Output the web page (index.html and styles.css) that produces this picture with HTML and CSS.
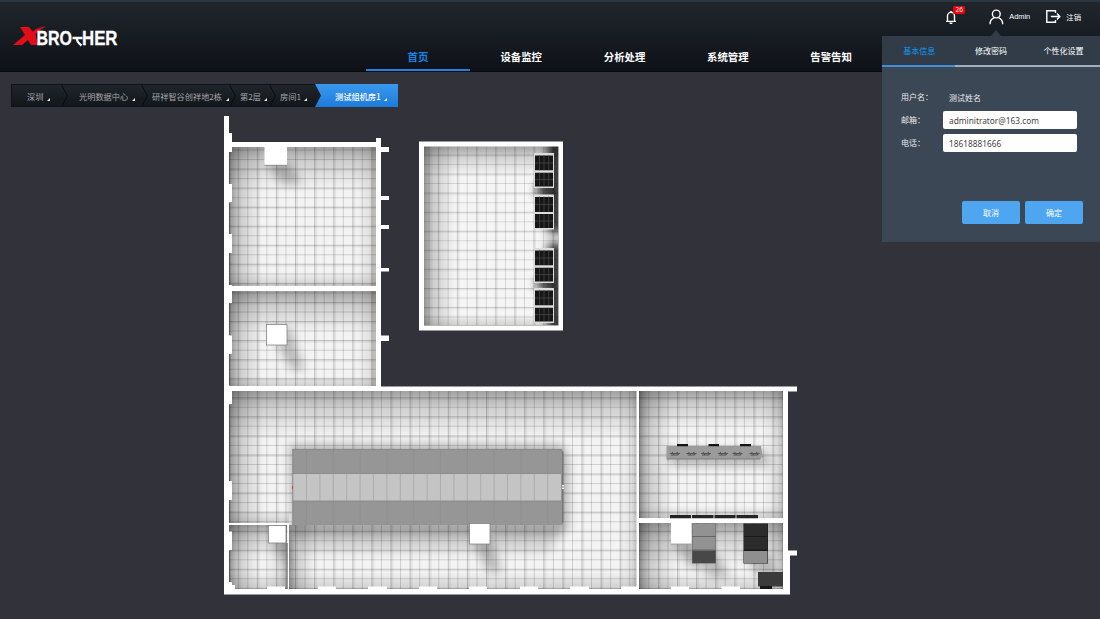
FILE: index.html
```html
<!DOCTYPE html>
<html lang="zh-CN">
<head>
<meta charset="utf-8">
<title>XBrother</title>
<link rel="stylesheet" href="styles.css">
</head>
<body>
<header class="header">
  <svg class="logo" width="112" height="26" viewBox="0 0 112 26">
    <path class="logo-x" d="M7 3h9l3.500 4.500Q25 3 33 2.500q-7 3-10.500 8L25 21h-7l-3-5-6 5H0l12-10z"/>
    <g class="logo-text">
      <text x="23.500" y="20.700" textLength="35.500" lengthAdjust="spacingAndGlyphs">BRO</text>
      <text x="69" y="20.700" textLength="35.500" lengthAdjust="spacingAndGlyphs">HER</text>
    </g>
    <path class="logo-t" d="M59.500 14h10M64 14q-.500 4 4.500 7.500"/>
  </svg>
  <nav class="nav">
    <a class="nav-item active">首页</a>
    <a class="nav-item">设备监控</a>
    <a class="nav-item">分析处理</a>
    <a class="nav-item">系统管理</a>
    <a class="nav-item">告警告知</a>
  </nav>
  <div class="tools">
    <span class="bell">
      <svg width="12" height="15" viewBox="0 0 12 15"><path class="line" d="M1 11.400h10M2.500 11.200V6a3.500 3.700 0 0 1 7 0v5.200M5.200 1.700h1.600M4.600 13.200h2.800"/></svg>
      <b class="badge">26</b>
    </span>
    <span class="tool user">
      <svg width="15" height="16" viewBox="0 0 15 16"><circle class="line" cx="7.300" cy="5" r="3.900"/><path class="line" d="M1 15.200c0-3 1.600-5.400 4.300-6.500M13.700 15.200c0-3-1.600-5.400-4.300-6.500"/></svg>
      Admin
    </span>
    <span class="tool">
      <svg width="15" height="13" viewBox="0 0 15 13"><path class="line" d="M9.500 3V.8H.8v11.400h8.700V10M4.800 6.500h8.800M11 3.600l2.800 2.900L11 9.400"/></svg>
      注销
    </span>
  </div>
</header>

<main class="main">
  <div class="crumbs">
    <a class="crumb c1">深圳<i></i></a>
    <a class="crumb c2">光明数据中心<i></i></a>
    <a class="crumb c3">研祥智谷创祥地2栋<i></i></a>
    <a class="crumb c4">第2层<i></i></a>
    <a class="crumb c5">房间1<i></i></a>
    <a class="crumb current">测试组机房1<i></i></a>
  </div>

  <svg class="plan" width="1100" height="511" viewBox="0 108 1100 511">
    <defs>
      <linearGradient id="fromLeft"><stop offset="0" stop-opacity=".4"/><stop offset=".3" stop-opacity=".16"/><stop offset="1" stop-opacity="0"/></linearGradient>
      <linearGradient id="fromRight" x1="1" x2="0"><stop offset="0" stop-opacity=".24"/><stop offset=".35" stop-opacity=".07"/><stop offset="1" stop-opacity="0"/></linearGradient>
      <linearGradient id="fromTop" x2="0" y2="1"><stop offset="0" stop-opacity=".34"/><stop offset=".35" stop-opacity=".15"/><stop offset="1" stop-opacity="0"/></linearGradient>
      <linearGradient id="fromBottom" y1="1" x2="0" y2="0"><stop offset="0" stop-opacity=".15"/><stop offset="1" stop-opacity="0"/></linearGradient>
      <filter id="soft" x="-50%" y="-50%" width="200%" height="200%"><feGaussianBlur stdDeviation="5"/></filter>
      <clipPath id="rooms"><path d="M229 147h147v139H229zM229 291h147v95H229zM229 391h408v198H229zM639 391h144v127H639zM639 523h144v66H639z"/></clipPath>
      <clipPath id="annex"><path d="M424 146h134.500v179.500H424z"/></clipPath>
      <clipPath id="floors"><path d="M229 147h147v139H229zM229 291h147v95H229zM229 391h408v198H229zM639 391h144v127H639zM639 523h144v66H639zM424 146h134.500v179.500H424z"/></clipPath>
      <g id="rack">
        <rect width="20" height="35" fill="#ddd"/>
        <path d="M1 2.500h18v15H1zM1 19.500h18v14H1z" fill="#161616"/>
        <path d="M5.500 2v31.500M10 2v31.500M14.700 2v31.500M1 10h18M1 26.500h18" stroke="#4a4a4a" stroke-width=".7"/>
        <path d="M0 18.500h20" stroke="#ddd" stroke-width="2"/>
      </g>
      <g id="console"><path d="M0 1h10M2-.5l2 3M7-.5l1.500 3M1 2.500h7" stroke="#555" stroke-width="1.100" fill="none"/></g>
    </defs>

    <!-- floors -->
    <path fill="#f3f3f3" d="M229 147h147v139H229zM229 291h147v95H229zM229 391h554v198H229z"/>
    <path fill="#f5f5f5" d="M424 146h134.500v179.500H424z"/>

    <!-- tile joints: wide dashed strokes, one dash per joint -->
    <g clip-path="url(#rooms)" stroke="#000" fill="none">
      <path d="M237.700 370H790" stroke-width="460" stroke-dasharray="1 8.550" stroke-opacity=".15"/>
      <path d="M237.700 370H790" stroke-width="460" stroke-dasharray="3 16.100" stroke-opacity=".06"/>
      <path d="M510 149.500V600" stroke-width="570" stroke-dasharray="1 8.530" stroke-opacity=".15"/>
      <path d="M510 168.500V600" stroke-width="570" stroke-dasharray="2.600 16.460" stroke-opacity=".06"/>
    </g>
    <g clip-path="url(#annex)" stroke="#000" fill="none">
      <path d="M428.500 236H560" stroke-width="190" stroke-dasharray="1 8.550" stroke-opacity=".13"/>
      <path d="M437.500 236H560" stroke-width="190" stroke-dasharray="3 16.100" stroke-opacity=".05"/>
      <path d="M491 154.500V330" stroke-width="140" stroke-dasharray="1 8.530" stroke-opacity=".13"/>
      <path d="M491 154.500V330" stroke-width="140" stroke-dasharray="2.600 16.460" stroke-opacity=".05"/>
    </g>

    <g fill="url(#fromLeft)">
      <rect x="229" y="147" width="34" height="139"/><rect x="229" y="291" width="34" height="95"/>
      <rect x="229" y="391" width="36" height="133"/><rect x="229" y="525" width="30" height="64"/>
      <rect x="289" y="525" width="26" height="64"/><rect x="639" y="391" width="34" height="127"/>
      <rect x="639" y="523" width="38" height="66"/><rect x="424" y="146" width="32" height="180"/>
    </g>
    <g fill="url(#fromRight)">
      <rect x="356" y="147" width="20" height="139"/><rect x="356" y="291" width="20" height="95"/>
      <rect x="620" y="391" width="17" height="198"/><rect x="762" y="391" width="21" height="127"/>
      <rect x="762" y="523" width="21" height="66"/><rect x="265" y="525" width="22" height="64"/>
    </g>
    <g fill="url(#fromTop)">
      <rect x="229" y="147" width="147" height="42"/><rect x="229" y="291" width="147" height="42"/>
      <rect x="229" y="391" width="408" height="46"/><rect x="639" y="391" width="144" height="38"/>
      <rect x="639" y="523" width="144" height="42"/><rect x="424" y="146" width="134.500" height="30"/>
      <rect x="229" y="525" width="58" height="34"/>
    </g>
    <g fill="url(#fromBottom)">
      <rect x="229" y="272" width="147" height="14"/><rect x="229" y="376" width="147" height="10"/>
      <rect x="229" y="572" width="408" height="17"/><rect x="229" y="510" width="60" height="13"/>
      <rect x="639" y="506" width="144" height="12"/><rect x="639" y="573" width="144" height="16"/>
      <rect x="424" y="314" width="134.500" height="12"/>
    </g>

    <!-- soft shadows beside the furniture -->
    <g clip-path="url(#floors)">
      <g filter="url(#soft)" opacity=".24">
        <path d="M266 162h23l13 22h-20zM268 328h22l14 42h-12zM272 540h15v30zM472 540h20l10 32h-14zM671 540h22l14 28h-16zM692 555h26l12 22h-20zM744 555h26l8 20h-20z"/>
        <path d="M289 444h272l8 12v72l-10 8H292zM665 450h100l6 16H672z"/>
      </g>
      <g filter="url(#soft)" opacity=".12"><path d="M292 524h270l-10 28H300z"/></g>
      <g filter="url(#soft)" opacity=".8"><path d="M548 140h16v93h-16zM548 243h16v90h-16zM537 183h24v14h-24zM537 278h24v12h-24z"/></g>
    </g>

    <!-- walls -->
    <g fill="#fff">
      <path d="M224 116h5v17h3v9h144v-4h5v9h8v5h-8v44h8v4h-8v25h8v4h-8v39h8v3.500h-8v64h8v5.500h-8v45.500h416v5h-9v159h9v5h-7v39H224z
        M229 152v32h3v18h-3v32h3v19h-3v32h3v1h144V147H232v5z
        M229 303v32.500h3V354h-3v32h147v-95H232v12z
        M229 404v77h3v19h-3v23h60v66h347.500V391H232v13z
        M229 525v6.500h3V550h-3v32h3v3h3v4h52.500v-64z
        M639 391v127.500h144V391zM639 523v66h144v-66z" fill-rule="evenodd"/>
      <path d="M419 141.500h144v189H419zM424 146.500v179h134.500v-179z" fill-rule="evenodd"/>
      <path d="M267 586.500h18v3h-18zM318 586.500h18v3h-18zM368 586.500h19v3h-19zM419 586.500h18v3h-18zM469 586.500h18v3h-18zM520 586.500h18v3h-18zM570 586.500h19v3h-19zM621 586.500h16v3h-16zM671 586.500h18v3h-18zM721.500 586.500h18.500v3h-18.500z"/>
    </g>
    <path d="M229.600 152v32M229.600 203v31M229.600 253v32M229.600 304v31M229.600 354v31M229.600 405v76M229.600 500v22M229.600 551v31" stroke="#444" stroke-opacity=".7" stroke-width="1.300"/>
    <path d="M287.200 543v46" stroke="#555" stroke-opacity=".65" stroke-width="1.300"/>

    <!-- pillars -->
    <path fill="#fff" d="M264.500 146h22.500v19h-22.500z"/><path d="M264.500 165.300H287" stroke="#888" stroke-width=".8"/>
    <g fill="#fff" stroke="#777" stroke-width=".7">
      <rect x="266.500" y="324.500" width="20.500" height="20.500"/>
      <rect x="268.500" y="525.500" width="17.500" height="17.500"/>
    </g>

    <!-- equipment racks -->
    <use href="#rack" x="534" y="153"/><use href="#rack" x="534" y="194.500"/>
    <use href="#rack" x="534" y="248"/><use href="#rack" x="534" y="288"/>

    <!-- cold aisle container -->
    <path d="M561 449l2.500 3v70l-2.500 3z" fill="#777"/>
    <rect x="292.500" y="449" width="269.500" height="76" fill="#969696"/>
    <rect x="293" y="473.500" width="268" height="27.500" fill="#c4c4c4"/>
    <path d="M306.500 474v27m13.400-27v27m13.400-27v27m13.400-27v27m13.400-27v27m13.400-27v27m13.400-27v27m13.400-27v27m13.400-27v27m13.400-27v27m13.400-27v27m13.400-27v27m13.400-27v27m13.400-27v27m13.400-27v27m13.400-27v27m13.400-27v27m13.400-27v27m13.400-27v27" stroke="#a6a6a6" stroke-width=".8"/>
    <path d="M306.500 449v24m26.800-24v24m26.800-24v24m26.800-24v24m26.800-24v24m26.800-24v24m26.800-24v24m26.800-24v24m26.800-24v24m26.800-24v24M306.500 501v24m26.800-24v24m26.800-24v24m26.800-24v24m26.800-24v24m26.800-24v24m26.800-24v24m26.800-24v24m26.800-24v24m26.800-24v24" stroke="#8e8e8e" stroke-width=".7"/>
    <path d="M292.500 449.400H562M292.500 473.500H561M292.500 501H561M292.800 449v76" stroke="#858585" stroke-width=".8"/>
    <path d="M292.500 486v3" stroke="#d44" stroke-width="1.200"/><path d="M563 485v4" stroke="#eee" stroke-width="2" stroke-dasharray="1.500 1"/>
    <rect x="469.500" y="523.500" width="20.500" height="20.500" fill="#fff" stroke="#777" stroke-width=".7"/>

    <!-- control desk -->
    <path d="M666.500 446H761l2 12-2-1.500v2.500H669l-1 2-1.500-2z" fill="#9b9b9b"/>
    <path d="M668 459h92" stroke="#777" stroke-width=".8"/>
    <path d="M677 444h11v2.300h-11zM708.500 444h10.500v2.300h-10.500zM740 444h11v2.300h-11z" fill="#161616"/>
    <use href="#console" x="670" y="452.500"/><use href="#console" x="686.500" y="452.500"/><use href="#console" x="701" y="452.500"/>
    <use href="#console" x="718" y="452.500"/><use href="#console" x="732.500" y="452.500"/><use href="#console" x="749.500" y="452.500"/>

    <!-- cabinets -->
    <path d="M670 515h21v3.300h-21zM692 515h21.500v3.300H692zM714.500 515h21v3.300h-21zM736.500 515H758v3.300h-21.500z" fill="#242424"/>
    <rect x="671" y="522" width="20.500" height="22" fill="#fff"/><path d="M671 544h20.500" stroke="#888" stroke-width=".7"/>
    <rect x="692" y="523.500" width="24" height="40" fill="#666"/>
    <path d="M692.500 524h23v12h-23zM692.500 537h23v12.500h-23z" fill="#929292"/><path d="M692.500 551h23v12h-23z" fill="#484848"/>
    <rect x="743.500" y="523.500" width="24.500" height="40" fill="#191919"/>
    <path d="M744 524h23.500v12H744zM744 537h23.500v12.500H744z" fill="#2c2c2c"/><path d="M744 551h23.500v12H744z" fill="#8f8f8f"/>
    <rect x="758" y="572" width="25" height="14.500" fill="#3b3b3b"/><path d="M760 586h12v3h-12z" fill="#171717"/>
  </svg>
</main>

<section class="panel">
  <div class="tabs"><a class="tab on">基本信息</a><a class="tab">修改密码</a><a class="tab">个性化设置</a></div>
  <div class="form">
    <div class="row"><label>用户名<span class="colon">：</span></label><span class="value">测试姓名</span></div>
    <div class="row"><label>邮箱<span class="colon">：</span></label><span class="field">adminitrator@163.com</span></div>
    <div class="row"><label>电话<span class="colon">：</span></label><span class="field">18618881666</span></div>
  </div>
  <div class="actions"><button>取消</button><button>确定</button></div>
</section>
</body>
</html>
```
FILE: styles.css
```css
* { box-sizing: border-box; }
body {
  margin: 0; width: 1100px; height: 619px; overflow: hidden; position: relative;
  background: #32323a; color: #fff;
  font-family: "Noto Sans", "Noto Sans CJK SC", sans-serif; font-size: 8px;
}
.header {
  height: 72px; display: flex; align-items: flex-start;
  background: linear-gradient(#20262c, #0e1218);
  border-top: 2px solid #2c3742; border-bottom: 1px solid #080b0e;
}
.logo { margin: 22px 0 0 13px; flex: none; overflow: visible; }
.logo-x { fill: #e30d18; }
.logo-text { fill: #fff; stroke: #fff; stroke-width: .3; font: 700 19.500px "Liberation Sans", sans-serif; }
.logo-t { fill: none; stroke: #fff; stroke-width: 2.300; }
.line { fill: none; stroke: #fff; stroke-width: 1.400; }
.nav { display: flex; margin-left: 241.300px; height: 69px; flex: none; }
.nav-item {
  width: 103.300px; padding-top: 46px; text-align: center;
  font: 700 10.400px/18px "Noto Sans CJK SC", sans-serif;
}
.nav-item.active { color: #1c83e2; border-bottom: 2px solid #1c83e2; }
.tools { display: flex; margin-left: 62.500px; padding-top: 6px; align-items: flex-start; height: 26px; font-size: 7.400px; }
.bell { position: relative; width: 44px; padding-top: 1.500px; }
.bell svg { display: block; }
.badge {
  position: absolute; left: 8px; top: -2px; width: 12px; height: 8px; border-radius: 1.500px;
  background: #f0000c; font: 6.500px/8px "Noto Sans", sans-serif; text-align: center;
}
.tool { display: flex; align-items: center; gap: 5px; height: 17px; white-space: nowrap; }
.user { width: 57px; font-family: "Liberation Sans", sans-serif; }

.main { display: flex; flex-direction: column; align-items: flex-start; }
.crumbs {
  display: flex; margin: 12px 0 1px 11px; width: 387px; height: 23px;
  background: linear-gradient(#20252b, #12171c); border: 1px solid #101318;
  color: #a4a7aa; font: 8.200px/22px "Noto Sans CJK SC", sans-serif;
}
.crumb { display: flex; align-items: center; gap: 3.500px; height: 21px; white-space: nowrap; flex: none; position: relative; }
.crumb i { width: 0; height: 0; margin-top: 7px; border-left: 3px solid transparent; border-bottom: 3px solid #eee; }
.crumb:not(.current)::after {
  content: ""; position: absolute; right: -8px; top: 3px; width: 15px; height: 15px;
  border-top: 1px solid #05070a; border-right: 1px solid #05070a;
  transform: scaleX(.5) rotate(45deg);
}
.c1 { width: 50px; padding-left: 15px; }
.c2 { width: 80px; padding-left: 17px; }
.c3 { width: 88px; padding-left: 10px; }
.c4 { width: 40px; padding-left: 10px; }
.c5 { width: 45px; padding-left: 10px; }
.crumb.current {
  width: 83px; height: 23px; margin-top: -1px; padding-left: 20px; color: #fff; font-weight: 500;
  background: linear-gradient(#3b98ee, #1d7cdb);
  clip-path: polygon(0 0, 100% 0, 100% 100%, 0 100%, 6px 50%);
}
.crumb.c5::after { display: none; }
.plan { display: block; }

.panel { position: absolute; left: 882px; top: 36px; width: 218px; height: 206px; background: #3c4755; }
.panel::before {
  content: ""; position: absolute; left: 109px; top: -6px;
  border: 5px solid transparent; border-top: 0; border-bottom: 6px solid #323c49;
}
.tabs { display: flex; height: 31px; background: #323c49; }
.tab { width: 72.600px; line-height: 30px; text-align: center; border-bottom: 2px solid #a2afbf; }
.tab.on { color: #0d9bf5; border-color: #3f8fdd; padding-left: 2px; }
.form { display: flex; flex-direction: column; gap: 5px; padding: 21px 0 0 19px; color: #e6e9ec; }
.row { display: flex; height: 18px; align-items: center; }
.row label { width: 42px; line-height: 16px; }
.colon { font-family: "Noto Sans CJK TC", sans-serif; line-height: 1; }
.value { padding-left: 6px; }
.field {
  width: 134px; height: 18px; padding-left: 6px; line-height: 19px; border-radius: 2px;
  background: #fff; color: #444; font-size: 8.300px;
}
.actions { display: flex; gap: 5px; padding: 49px 0 0 80px; }
.actions button {
  width: 58px; height: 23px; padding: 0 0 1px; border: 0; border-radius: 2px;
  background: #4ea5f0; color: #fff; font: inherit;
}
```
